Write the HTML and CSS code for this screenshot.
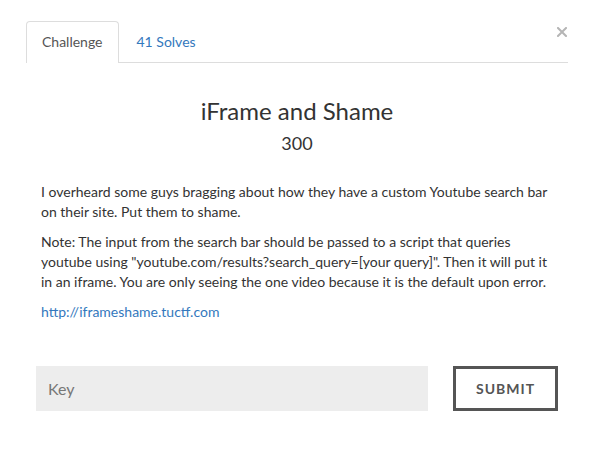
FILE: index.html
```html
<!DOCTYPE html>
<html>
<head>
<meta charset="utf-8">
<link rel="stylesheet" href="styles.css">
</head>
<body>
<div class="modal">
  <button class="close" aria-label="Close">
    <svg width="10" height="10" viewBox="0 0 10 10"><path d="M1 1L9 9M9 1L1 9" stroke="#b5b5b5" stroke-width="2" stroke-linecap="square"/></svg>
  </button>
  <ul class="tabs">
    <li class="tab active">Challenge</li>
    <li class="tab"><a href="#">41 Solves</a></li>
  </ul>
  <div class="body">
    <h2 class="title">iFrame and Shame</h2>
    <h3 class="value">300</h3>
    <div class="desc">
      <p>I overheard some guys bragging about how they have a custom Youtube search bar on their site. Put them to shame.</p>
      <p>Note: The input from the search bar should be passed to a script that queries youtube using "youtube.com/results?search_query=[your query]". Then it will put it in an iframe. You are only seeing the one video because it is the default upon error.</p>
      <p><a href="#">http://iframeshame.tuctf.com</a></p>
    </div>
    <form class="submit-row">
      <input class="key" type="text" placeholder="Key">
      <div class="btn-cell"><button type="button" class="submit">Submit</button></div>
    </form>
  </div>
</div>
</body>
</html>
```

FILE: styles.css
```css
html, body {
  margin: 0;
  padding: 0;
  background: #fff;
}
body {
  font-family: Lato, "Open Sans", sans-serif;
  color: #333;
  font-size: 14px;
}
a {
  color: #3378bd;
  text-decoration: none;
}
.modal {
  position: relative;
  padding: 21px 23px 0 26px;
}
.close {
  position: absolute;
  top: 27px;
  left: 557px;
  width: 10px;
  height: 10px;
  padding: 0;
  border: 0;
  background: none;
  display: block;
}
.close svg { display: block; }
.tabs {
  list-style: none;
  margin: 0;
  padding: 0;
  display: flex;
  border-bottom: 1px solid #ddd;
}
.tab {
  height: 40px;
  line-height: 40px;
  padding: 0 15px;
  margin-right: 2px;
  border: 1px solid transparent;
  border-bottom: 0;
  border-radius: 4px 4px 0 0;
  margin-bottom: -1px;
  font-size: 14px;
}
.tab.active {
  border-color: #ddd;
  background: #fff;
  color: #555;
  height: 41px;
}
.body {
  padding-top: 33px;
}
.title {
  margin: 0;
  text-align: center;
  font-size: 24px;
  line-height: 30px;
  font-weight: 400;
  color: #333;
}
.value {
  margin: 5px 0 0;
  text-align: center;
  font-size: 18px;
  line-height: 24px;
  font-weight: 400;
  color: #333;
}
.desc {
  padding: 27px 15px 0;
}
.desc p {
  margin: 0 0 10px;
  line-height: 20px;
}
.submit-row {
  margin: 44px 10px 0;
  display: grid;
  grid-template-columns: 3fr 1fr;
}
.key {
  box-sizing: border-box;
  height: 45px;
  border: 0;
  background: #ededed;
  padding: 0 12px;
  font-family: Lato, sans-serif;
  font-size: 16px;
  color: #333;
  outline: none;
}
.key::placeholder {
  color: #777;
}
.btn-cell {
  display: flex;
  justify-content: flex-end;
}
.submit {
  box-sizing: border-box;
  width: 105px;
  height: 45px;
  border: 3px solid #555;
  background: #fff;
  color: #555;
  font-family: Lato, sans-serif;
  font-weight: 700;
  font-size: 14px;
  letter-spacing: 1px;
  text-transform: uppercase;
  padding: 0;
}
```
